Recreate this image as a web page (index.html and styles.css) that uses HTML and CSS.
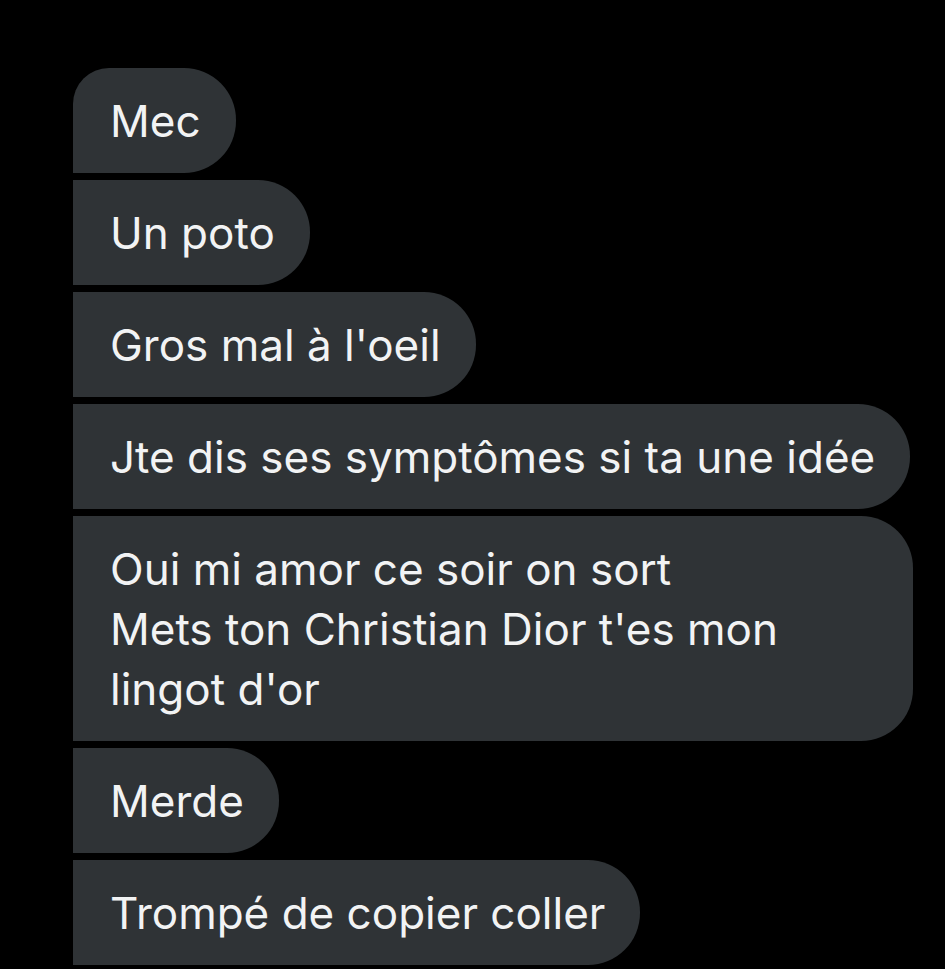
FILE: index.html
```html
<!DOCTYPE html>
<html lang="fr">
<head>
<meta charset="utf-8">
<title>Messages</title>
<link rel="stylesheet" href="styles.css">
</head>
<body>
<main class="thread">
  <div class="bubble first">Mec</div>
  <div class="bubble">Un poto</div>
  <div class="bubble">Gros mal à l'oeil</div>
  <div class="bubble">Jte dis ses symptômes si ta une idée</div>
  <div class="bubble wide">Oui mi amor ce soir on sort<br>Mets ton Christian Dior t'es mon<br>lingot d'or</div>
  <div class="bubble">Merde</div>
  <div class="bubble">Trompé de copier coller</div>
</main>
</body>
</html>
```

FILE: styles.css
```css
html, body {
  margin: 0;
  padding: 0;
  background: #000;
  height: 100%;
  overflow: hidden;
}

.thread {
  display: flex;
  flex-direction: column;
  align-items: flex-start;
  gap: 7px;
  width: 840px;
  padding: 68px 0 0 73px;
}

.bubble {
  box-sizing: border-box;
  background: #2f3336;
  color: #f2f3f4;
  font-family: Inter, "Noto Sans", sans-serif;
  font-size: 44px;
  line-height: 60px;
  padding: 22.5px 35px 22.5px 37px;
  border-radius: 0 52px 52px 0;
  white-space: nowrap;
}

.bubble.first {
  border-top-left-radius: 36px;
}

.bubble.wide {
  align-self: stretch;
}
```
